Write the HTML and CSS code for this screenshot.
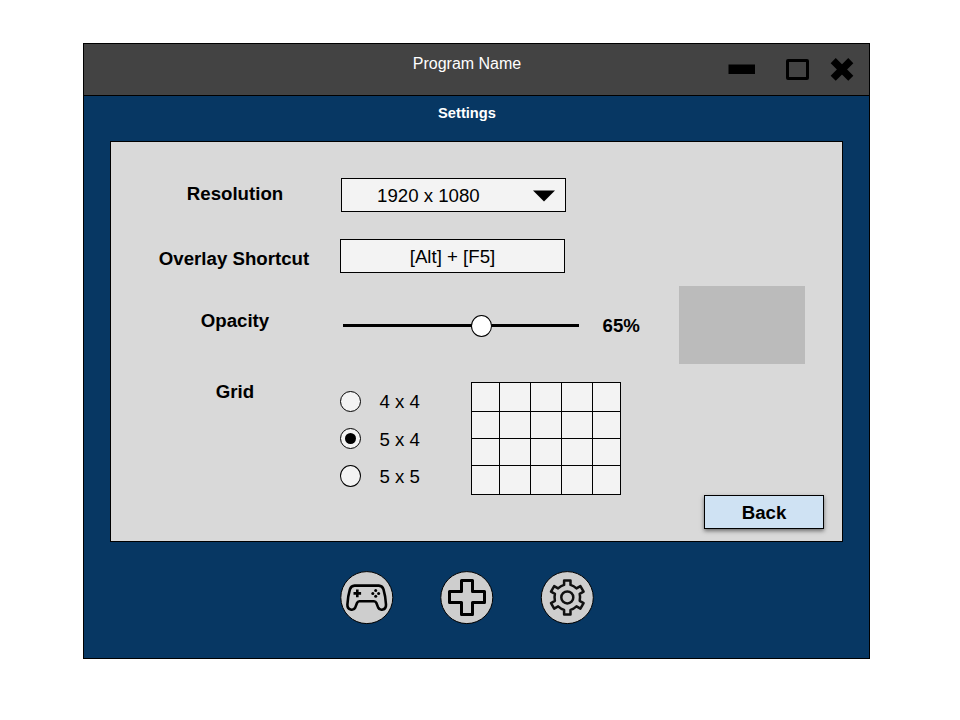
FILE: index.html
```html
<!DOCTYPE html>
<html lang="en">
<head>
<meta charset="utf-8">
<title>Settings</title>
<link rel="stylesheet" href="styles.css">
</head>
<body>
<main class="window">
  <header class="titlebar">
    <span class="title">Program Name</span>
    <div class="controls">
      <svg width="126" height="26" viewBox="0 0 126 26">
        <rect x="0.5" y="8.5" width="26.5" height="9.5" fill="#000"/>
        <rect x="59.5" y="4.5" width="20" height="18" rx="0.5" fill="none" stroke="#000" stroke-width="3"/>
        <path d="M105.2 4.6L122.8 22.2M122.8 4.6L105.2 22.2" stroke="#000" stroke-width="7.2"/>
      </svg>
    </div>
  </header>
  <h1 class="heading">Settings</h1>
  <section class="panel">
    <div class="row row-resolution">
      <span class="label">Resolution</span>
      <div class="field select">
        <span>1920 x 1080</span>
        <svg width="22" height="12" viewBox="0 0 22 12"><path d="M0 0.5H22L11 11.5Z"/></svg>
      </div>
    </div>
    <div class="row row-shortcut">
      <span class="label">Overlay Shortcut</span>
      <div class="field">[Alt] + [F5]</div>
    </div>
    <div class="row row-opacity">
      <span class="label">Opacity</span>
      <div class="slider"><span class="thumb"></span></div>
      <span class="value">65%</span>
      <div class="swatch"></div>
    </div>
    <div class="row row-grid">
      <span class="label">Grid</span>
      <div class="options">
        <div class="option"><i class="radio"></i><span>4 x 4</span></div>
        <div class="option"><i class="radio checked"></i><span>5 x 4</span></div>
        <div class="option"><i class="radio"></i><span>5 x 5</span></div>
      </div>
      <div class="cells">
        <i></i><i></i><i></i><i></i><i></i>
        <i></i><i></i><i></i><i></i><i></i>
        <i></i><i></i><i></i><i></i><i></i>
        <i></i><i></i><i></i><i></i><i></i>
      </div>
    </div>
    <div class="actions"><button class="back">Back</button></div>
  </section>
  <nav class="dock">
    <svg width="54" height="54" viewBox="0 0 54 54">
      <circle class="disc" cx="26.8" cy="26.6" r="26"/>
      <path class="pad" d="M14.6 14.6H38.8Q42.4 14.8 43.5 18.4Q45.6 25.5 46 33.5C46.2 39.6 39.8 40 38.2 36.6L36.4 32Q35.7 30.2 34 30.2H19.4Q17.7 30.2 17 32L15.2 36.6C13.6 40 7.2 39.6 7.4 33.5Q7.8 25.5 9.9 18.4Q11 14.8 14.6 14.6Z"/>
      <path class="pad" d="M17.3 18.6V26.2M13.5 22.4H21.1"/>
      <g class="dots"><circle cx="35.7" cy="19.5" r="1.5"/><circle cx="35.7" cy="25.3" r="1.5"/><circle cx="32.8" cy="22.4" r="1.5"/><circle cx="38.6" cy="22.4" r="1.5"/></g>
    </svg>
    <svg width="54" height="54" viewBox="0 0 54 54">
      <circle class="disc" cx="26.8" cy="26.6" r="26"/>
      <path class="plus" d="M21.5 9.5H32.5V20.5H44.5V31.5H32.5V43.5H21.5V31.5H9.5V20.5H21.5Z"/>
    </svg>
    <svg width="54" height="54" viewBox="0 0 54 54">
      <circle class="disc" cx="27.3" cy="26.6" r="26"/>
      <g class="gear" transform="translate(27.3 26.4)">
        <path d="M-3.2-12.5V-17H3.2V-12.5Q6.5-11.5 9.2-9L13.1-11.3L16.3-5.7L12.4-3.5Q13.2 0 12.4 3.5L16.3 5.7L13.1 11.3L9.2 9Q6.5 11.5 3.2 12.5V17H-3.2V12.5Q-6.5 11.5-9.2 9L-13.1 11.3L-16.3 5.7L-12.4 3.5Q-13.2 0-12.4-3.5L-16.3-5.7L-13.1-11.3L-9.2-9Q-6.5-11.5-3.2-12.5Z"/>
        <circle r="6"/>
      </g>
    </svg>
  </nav>
</main>
</body>
</html>
```
FILE: styles.css
```css
* { box-sizing: border-box; }

body {
  margin: 0;
  padding: 43px 0 0 83px;
  background: #fff;
  color: #000;
  font: 18.67px/22px "Liberation Sans", Arial, sans-serif;
}

svg { display: block; flex: none; }

.window {
  width: 787px;
  height: 616px;
  border: 1px solid #000;
  background: #073763;
}

.titlebar {
  display: grid;
  grid-template-columns: 1fr 126px;
  height: 52px;
  padding: 8px 15px 0 0;
  border-bottom: 1px solid #000;
  background: #434343;
}

.title {
  padding: 1px 0 0 122px;
  color: #fff;
  font-size: 16px;
  text-align: center;
}

.controls { padding-top: 4px; }

.heading {
  height: 45px;
  margin: 0;
  padding: 6px 19px 0 0;
  color: #fff;
  font-size: 14.67px;
  font-weight: bold;
  text-align: center;
}

.panel {
  width: 733px;
  height: 401px;
  margin-left: 26px;
  padding: 36px 18px 0 18px;
  border: 1px solid #000;
  background: #d9d9d9;
}

.row { display: flex; align-items: flex-start; }

.label {
  flex: none;
  width: 211px;
  font-weight: bold;
  text-align: center;
}

.row-resolution { height: 34px; margin-bottom: 27px; }
.row-resolution .label { width: 212px; padding-top: 5px; }
.row-shortcut { height: 34px; margin-bottom: 13px; }
.row-shortcut .label { padding: 9px 1px 0 0; }
.row-opacity { height: 79px; margin-bottom: 17px; }
.row-opacity .label { padding: 24px 0 0 1px; }
.row-grid { height: 113px; }
.row-grid .label { padding-left: 1px; margin-top: -1px; }

.field {
  width: 225px;
  height: 34px;
  padding-top: 6px;
  border: 1px solid #000;
  background: #f3f3f3;
  text-align: center;
}

.select {
  display: flex;
  justify-content: space-between;
  padding: 6px 10px 0 35px;
}

.select svg { margin-top: 5px; }

.slider {
  display: flex;
  align-items: center;
  width: 236px;
  height: 3px;
  margin: 38px 24px 0 2.6px;
  background: #000;
}

.thumb {
  flex: none;
  width: 21px;
  height: 22px;
  margin-left: 128px;
  border: 1px solid #000;
  border-radius: 50%;
  background: #fff;
}

.value { width: 76px; padding-top: 29px; font-weight: bold; }

.swatch { width: 126.5px; height: 78px; background: #bbb; }

.options {
  display: grid;
  gap: 16px;
  width: 131px;
  padding-top: 9px;
}

.option { display: flex; gap: 18.5px; height: 21px; }
.option + .option { line-height: 23px; }

.radio {
  display: grid;
  place-items: center;
  width: 21px;
  height: 21px;
  border: 1px solid #000;
  border-radius: 50%;
  background: #f3f3f3;
}

.checked::after {
  content: "";
  width: 11px;
  height: 11px;
  border-radius: 50%;
  background: #000;
}

.option:last-child { line-height: 24px; }
.option:last-child .radio { height: 22px; }

.cells {
  display: grid;
  grid-template-columns: 27px 30px 30px 30px 27px;
  grid-template-rows: 28px 26px 26px 28px;
  gap: 1px;
  border: 1px solid #000;
  background: #000;
}

.cells i { background: #f3f3f3; }

.actions { display: flex; justify-content: flex-end; }

.back {
  width: 120px;
  height: 34px;
  padding: 2px 0 0;
  border: 1px solid #000;
  background: #cfe2f3;
  box-shadow: 0 2px 4px rgba(0, 0, 0, 0.5);
  color: #000;
  font: bold 18.67px/22px "Liberation Sans", Arial, sans-serif;
}

.dock {
  display: flex;
  gap: 46px;
  padding: 29px 0 0 256px;
}

.disc { fill: #cecece; stroke: #000; stroke-width: 1; }
.pad { fill: none; stroke: #000; stroke-width: 2.6; stroke-linejoin: round; }
.plus { fill: none; stroke: #000; stroke-width: 3; stroke-linejoin: round; }
.gear { fill: none; stroke: #111; stroke-width: 2.5; stroke-linejoin: round; }
```
